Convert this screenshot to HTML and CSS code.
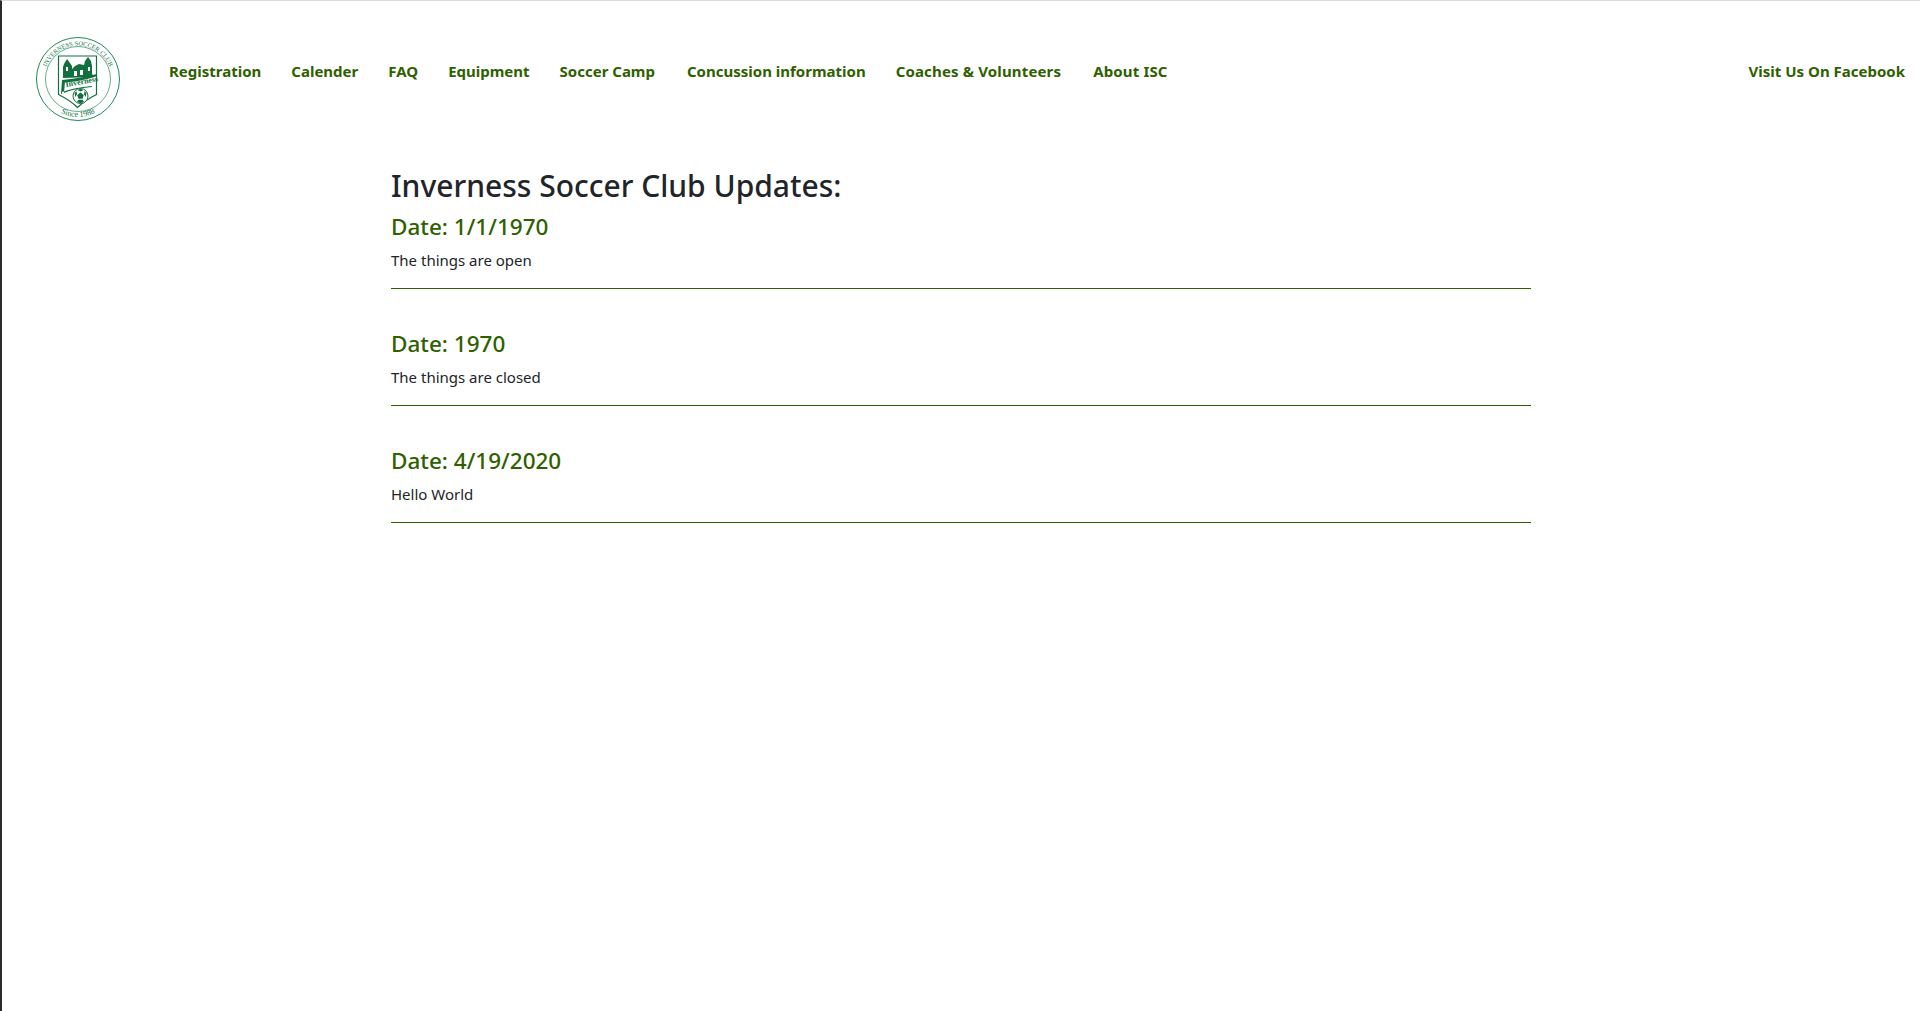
FILE: index.html
```html
<!DOCTYPE html>
<html>
<head>
  <title>Inverness Soccer Club</title>
  <link rel="stylesheet" href="styles.css">
</head>
<body>
  <nav class="navbar">
    <a href="#" class="brand">
      <svg class="logo" viewBox="0 0 84 84" width="84" height="84">
        <defs>
          <path id="arcTop" d="M8.500 42a33.500 33.500 0 0 1 67 0"/>
          <path id="arcBottom" d="M4 42a38 38 0 0 0 76 0"/>
        </defs>
        <circle cx="42" cy="42" r="41.500" fill="none" stroke="#1f8a5b" stroke-width="1"/>
        <circle cx="42" cy="42" r="32.500" fill="none" stroke="#1f8a5b" stroke-width=".7"/>
        <text class="logo-text"><textPath href="#arcTop" startOffset="50%" text-anchor="middle">INVERNESS SOCCER CLUB</textPath></text>
        <text class="logo-since"><textPath href="#arcBottom" startOffset="50%" text-anchor="middle">Since 1988</textPath></text>
        <!-- crest -->
        <path d="M22.500 19h38v38.500c-6 3-13 7-19 13-6-6-13-10-19-13z" fill="#fff" stroke="#12703f" stroke-width="1.200"/>
        <path d="M27 41v-11l1-3 3-5 3 4 2 3v3l3-3 4-2 5 1 1-4 3-4 3 4 1 5v8l3 3z" fill="#12703f"/>
        <path d="M38 34h3v5h-3zM44 33h3v5h-3zM30 30h2v4h-2zM52 30h2v4h-2z" fill="#fff"/>
        <path d="M26 46c10-1 24-3 35-7v-2c-11 3-24 5-35 6z" fill="#12703f"/>
        <path d="M25 57l1-14 3 1-1 12zM26 57c8-4 18-6 30-7v-1c-12 1-22 3-30 6z" fill="#12703f"/>
        <text class="logo-script" x="30" y="50" transform="rotate(-10 30 50)">Inverness</text>
        <circle cx="44.500" cy="59" r="7.500" fill="#fff" stroke="#12703f" stroke-width="1"/>
        <path d="M44.500 55.500l3.300 2.400-1.300 3.900h-4l-1.300-3.900zM44.500 51.800l3 1.200-3 1.400-3-1.400zM38.500 56l2-1.800.5 3-1.700 2.800zM50.500 56l-2-1.800-.5 3 1.700 2.800zM41 65l1.500-2.200h4l1.500 2.200-3.500 1.200z" fill="#12703f"/>
      </svg>
    </a>
    <ul class="nav-links">
      <li><a href="#">Registration</a></li>
      <li><a href="#">Calender</a></li>
      <li><a href="#">FAQ</a></li>
      <li><a href="#">Equipment</a></li>
      <li><a href="#">Soccer Camp</a></li>
      <li class="nudge"><a href="#">Concussion information</a></li>
      <li class="wide"><a href="#">Coaches &amp; Volunteers</a></li>
      <li class="wide nudge"><a href="#">About ISC</a></li>
    </ul>
    <a href="#" class="fb-link">Visit Us On Facebook</a>
  </nav>

  <main class="content">
    <h2>Inverness Soccer Club Updates:</h2>
    <div class="update">
      <h4>Date: 1/1/1970</h4>
      <p>The things are open</p>
    </div>
    <div class="update">
      <h4>Date: 1970</h4>
      <p>The things are closed</p>
    </div>
    <div class="update">
      <h4>Date: 4/19/2020</h4>
      <p>Hello World</p>
    </div>
  </main>
</body>
</html>
```

FILE: styles.css
```css
html, body {
  height: 100%;
}
body {
  margin: 0;
  box-sizing: border-box;
  border-top: 1px solid #dcdcdc;
  border-left: 2px solid #2b2b2b;
  font-family: "Noto Sans", "Open Sans", sans-serif;
  font-size: 15px;
  line-height: 24px;
  color: #212529;
  background-color: #fff;
}
a {
  color: #2f6000;
  text-decoration: none;
}
.navbar {
  display: flex;
  align-items: flex-start;
  height: 130px;
  padding: 36px 15px 0 34px;
}
.brand {
  display: block;
  width: 84px;
  height: 84px;
  margin-right: 49px;
}
.logo {
  display: block;
}
.logo-text {
  font-family: "Liberation Serif", serif;
  font-size: 6.400px;
  fill: #12703f;
}
.logo-since {
  font-family: "Liberation Serif", serif;
  font-size: 8px;
  fill: #12703f;
}
.logo-script {
  font-family: "Liberation Serif", serif;
  font-size: 8px;
  font-weight: 700;
  fill: #12703f;
}
.nav-links {
  display: flex;
  gap: 30px;
  list-style: none;
  margin: 0;
  padding: 22px 0 0;
}
.nav-links a, .fb-link {
  font-size: 15px;
  font-weight: 700;
}
.nav-links .nudge {
  margin-left: 2px;
}
.nav-links .wide a {
  letter-spacing: .15px;
}
.fb-link {
  margin-left: auto;
  padding-top: 22px;
}
.content {
  width: 1140px;
  margin-left: 389px;
}
.content h2 {
  margin: 0 0 7px;
  font-size: 30px;
  font-weight: 500;
  line-height: 38px;
}
.update {
  margin-bottom: 40px;
  padding-bottom: 16px;
  border-bottom: 1px solid #2f6000;
}
.update h4 {
  margin: 0 0 6px;
  font-size: 22.500px;
  font-weight: 500;
  line-height: 30px;
  color: #2f6000;
}
.update p {
  margin: 0;
}
```
